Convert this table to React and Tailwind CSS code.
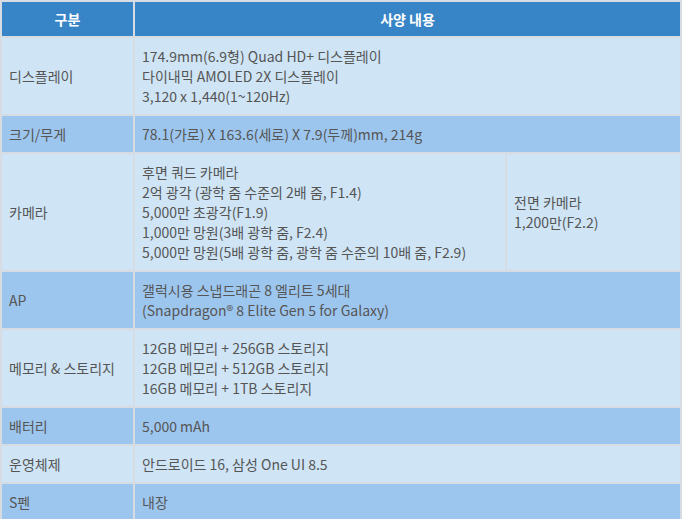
import React from "react";

const rows = [
  { label: "디스플레이", lines: ["174.9mm(6.9형) Quad HD+ 디스플레이", "다이내믹 AMOLED 2X 디스플레이", "3,120 x 1,440(1~120Hz)"], dark: false },
  { label: "크기/무게", lines: ["78.1(가로) X 163.6(세로) X 7.9(두께)mm, 214g"], dark: true },
  {
    label: "카메라",
    lines: ["후면 쿼드 카메라", "2억 광각 (광학 줌 수준의 2배 줌, F1.4)", "5,000만 초광각(F1.9)", "1,000만 망원(3배 광학 줌, F2.4)", "5,000만 망원(5배 광학 줌, 광학 줌 수준의 10배 줌, F2.9)"],
    side: ["전면 카메라", "1,200만(F2.2)"],
    dark: false,
  },
  { label: "AP", lines: ["갤럭시용 스냅드래곤 8 엘리트 5세대", "(Snapdragon® 8 Elite Gen 5 for Galaxy)"], dark: true },
  { label: "메모리 & 스토리지", lines: ["12GB 메모리 + 256GB 스토리지", "12GB 메모리 + 512GB 스토리지", "16GB 메모리 + 1TB 스토리지"], dark: false },
  { label: "배터리", lines: ["5,000 mAh"], dark: true },
  { label: "운영체제", lines: ["안드로이드 16, 삼성 One UI 8.5"], dark: false },
  { label: "S펜", lines: ["내장"], dark: true },
];

const App = () => {
  return (
    <div className="w-[683px] h-[519px] bg-white font-['Noto_Sans_CJK_KR',sans-serif] text-[14px] leading-[20px] text-[#555]">
      <table className="w-[682px] border-collapse border-2 border-[#d6dce1]">
        <thead>
          <tr className="bg-[#3784c6] text-white font-bold h-[36px]">
            <th className="w-[133px] border-2 border-[#d6dce1] text-center">구분</th>
            <th colSpan={2} className="border-2 border-[#d6dce1] text-center">사양 내용</th>
          </tr>
        </thead>
        <tbody>
          {rows.map((r) => (
            <tr key={r.label} className={r.dark ? "bg-[#9dc6ee]" : "bg-[#cfe5f5]"}>
              <td className="border-2 border-[#d6dce1] pl-[7px] py-[8px] align-middle">{r.label}</td>
              <td colSpan={r.side ? 1 : 2} className="border-2 border-[#d6dce1] pl-[7px] py-[8px] align-middle">
                {r.lines.map((l) => (
                  <div key={l}>{l}</div>
                ))}
              </td>
              {r.side && (
                <td className="w-[175px] border-2 border-[#d6dce1] pl-[7px] py-[8px] align-middle">
                  {r.side.map((l) => (
                    <div key={l}>{l}</div>
                  ))}
                </td>
              )}
            </tr>
          ))}
        </tbody>
      </table>
    </div>
  );
};

export default App;
